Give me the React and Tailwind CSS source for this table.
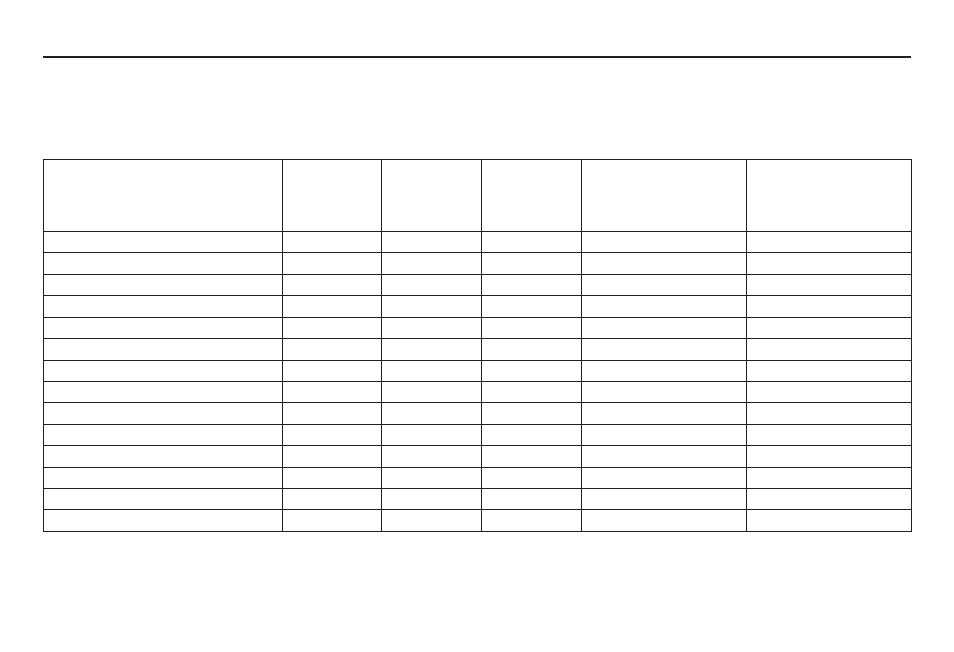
const cols = ['w-[239px]', 'w-[99px]', 'w-[100px]', 'w-[100px]', 'w-[165px]', 'w-[165px]'];
const rows = Array.from({ length: 14 }, (_, i) => i);

export default function App() {
  return (
    <div className="min-h-[652px] w-[954px] bg-white px-[43px] pt-[56px] font-['Liberation_Sans',sans-serif]">
      {/* top rule */}
      <div className="h-[2px] w-[868px] bg-[#231f20]" />

      <table className="mt-[101px] w-[869px] table-fixed border-collapse border border-[#231f20]">
        <colgroup>
          {cols.map((c, i) => (
            <col key={i} className={c} />
          ))}
        </colgroup>
        <thead>
          <tr className="h-[72px]">
            {cols.map((_, i) => (
              <th key={i} className="border border-[#231f20] p-0" />
            ))}
          </tr>
        </thead>
        <tbody>
          {rows.map((r) => (
            <tr key={r} className="h-[21.43px]">
              {cols.map((_, i) => (
                <td key={i} className="border border-[#231f20] p-0" />
              ))}
            </tr>
          ))}
        </tbody>
      </table>
    </div>
  );
}
